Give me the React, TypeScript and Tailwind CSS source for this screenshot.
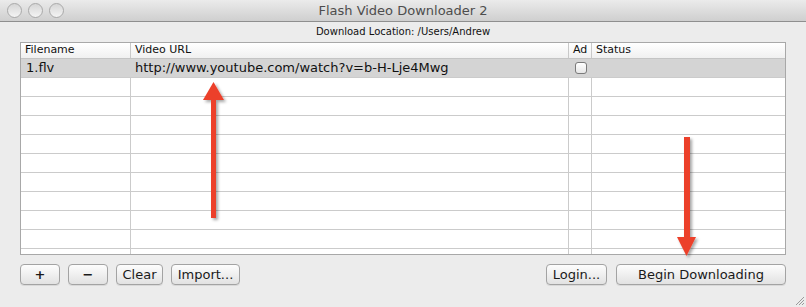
const font = { fontFamily: '"DejaVu Sans", "Liberation Sans", sans-serif' };

const columns = [
  { label: 'Filename', width: 'w-[110px]' },
  { label: 'Video URL', width: 'w-[438px]' },
  { label: 'Ad', width: 'w-[23px]' },
  { label: 'Status', width: 'flex-1' },
];

const emptyRows = Array.from({ length: 10 });

const TrafficLight = () => (
  <div className="h-[15px] w-[15px] rounded-full border border-[#a9a9a9] bg-gradient-to-b from-[#d6d6d6] to-[#f4f4f4]" />
);

const MacButton = ({ label, className = '' }: { label: string; className?: string }) => (
  <button
    className={`h-[21px] rounded-[4px] border border-[#a3a3a3] bg-gradient-to-b from-[#fdfdfd] to-[#e2e2e2] text-[13px] leading-none text-[#1a1a1a] shadow-[0_1px_0_rgba(0,0,0,0.08)] ${className}`}
  >
    {label}
  </button>
);

const Arrow = ({ direction, className }: { direction: 'up' | 'down'; className: string }) => (
  <svg className={`absolute ${className}`} width="28" height="140" viewBox="0 0 28 140" overflow="visible">
    <defs>
      <filter id={`shadow-${direction}`} x="-50%" y="-20%" width="200%" height="140%">
        <feDropShadow dx="2" dy="2" stdDeviation="1.6" floodColor="#000" floodOpacity="0.35" />
      </filter>
    </defs>
    {direction === 'up' ? (
      <g filter={`url(#shadow-${direction})`} fill="#ec3f2a">
        <polygon points="13.5,0 24,18 3,18" />
        <rect x="11" y="17" width="5" height="119" />
      </g>
    ) : (
      <g filter={`url(#shadow-${direction})`} fill="#ec3f2a">
        <rect x="11" y="0" width="6" height="102" />
        <polygon points="4,100 23,100 13.5,119" />
      </g>
    )}
  </svg>
);

export default function App() {
  return (
    <div className="relative flex h-[307px] w-[806px] flex-col overflow-hidden bg-[#ececec]" style={font}>
      {/* title bar */}
      <div className="relative flex h-[22px] items-center border-b border-[#8f8f8f] bg-gradient-to-b from-[#ebebeb] to-[#cfcfcf] px-[7px]">
        <div className="flex gap-[6px]">
          <TrafficLight />
          <TrafficLight />
          <TrafficLight />
        </div>
        <div className="absolute inset-x-0 text-center text-[13px] text-[#4d4d4d]">Flash Video Downloader 2</div>
      </div>

      <div className="pt-[4px] text-center text-[10px] leading-[12px] text-[#111]">Download Location: /Users/Andrew</div>

      {/* table */}
      <div className="mx-[20px] mt-[4px] flex h-[213px] flex-col overflow-hidden border border-[#a8a8a8] bg-white">
        <div className="flex h-[16px] shrink-0 border-b border-[#c4c4c4] bg-gradient-to-b from-[#ffffff] to-[#f0f0f0] text-[11px] text-[#111]">
          {columns.map((c, i) => (
            <div key={c.label} className={`${c.width} flex items-center px-[4px] ${i < 3 ? 'border-r border-[#c9c9c9]' : ''}`}>
              {c.label}
            </div>
          ))}
        </div>
        <div className="flex h-[18px] shrink-0 bg-[#d4d4d4] text-[13px] text-[#111]">
          <div className="flex w-[110px] items-center px-[5px]">1.flv</div>
          <div className="flex w-[438px] items-center px-[4px]">http://www.youtube.com/watch?v=b-H-Lje4Mwg</div>
          <div className="flex w-[23px] items-center justify-center">
            <div className="h-[12px] w-[12px] rounded-[3px] border border-[#7a7a7a] bg-gradient-to-b from-[#ffffff] to-[#e6e6e6]" />
          </div>
          <div className="flex-1" />
        </div>
        {emptyRows.map((_, r) => (
          <div key={r} className="flex h-[19px] shrink-0 border-t border-[#cbcbcb]">
            {columns.map((c, i) => (
              <div key={c.label} className={`${c.width} ${i < 3 ? 'border-r border-[#cbcbcb]' : ''}`} />
            ))}
          </div>
        ))}
      </div>

      {/* buttons */}
      <div className="mx-[20px] mt-[9px] flex">
        <MacButton label="+" className="w-[40px] font-bold" />
        <MacButton label="−" className="ml-[8px] w-[40px] font-bold" />
        <MacButton label="Clear" className="ml-[8px] w-[47px]" />
        <MacButton label="Import..." className="ml-[8px] w-[69px]" />
        <MacButton label="Login..." className="ml-auto w-[61px]" />
        <MacButton label="Begin Downloading" className="ml-[9px] w-[170px]" />
      </div>

      {/* resize grip */}
      <svg className="absolute bottom-[1px] right-[1px]" width="11" height="11" viewBox="0 0 11 11">
        <path d="M10 2 L2 10 M10 5 L5 10 M10 8 L8 10" stroke="#9a9a9a" strokeWidth="1" />
      </svg>

      <Arrow direction="up" className="left-[200px] top-[82px]" />
      <Arrow direction="down" className="left-[673px] top-[137px]" />
    </div>
  );
}
